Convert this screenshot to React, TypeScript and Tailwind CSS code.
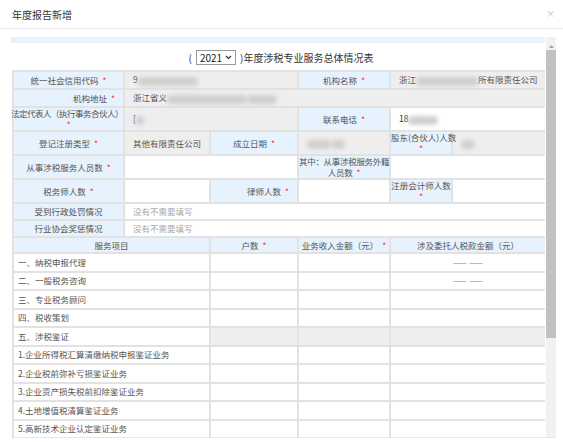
import React from 'react';

const font = { fontFamily: '"Noto Sans CJK SC", "Noto Sans", sans-serif' };

function Star() {
  return <span className="ml-1 text-[#f33]">*</span>;
}

function Blur({ w }: { w: number }) {
  return (
    <span
      className="inline-block h-[9px] rounded-full bg-[#cfcfcf] blur-[2px] align-middle"
      style={{ width: w }}
    />
  );
}

const label = 'bg-[#e6f2fd] border-2 border-[#e2e2e2] text-center text-[#555] leading-[11px] px-0.5';
const ro = 'bg-[#eeeeee] border-2 border-[#e2e2e2] px-2 text-[#555] leading-[11px]';
const inp = 'bg-white border-2 border-[#e2e2e2] px-2 leading-[11px]';
const item = 'bg-white border-2 border-[#e2e2e2] px-1 text-[#555] leading-[11px]';

const services = [
  { name: '一、纳税申报代理', dash: true },
  { name: '二、一般税务咨询', dash: true },
  { name: '三、专业税务顾问' },
  { name: '四、税收策划' },
  { name: '五、涉税鉴证', locked: true },
  { name: '1.企业所得税汇算清缴纳税申报鉴证业务' },
  { name: '2.企业税前弥补亏损鉴证业务' },
  { name: '3.企业资产损失税前扣除鉴证业务' },
  { name: '4.土地增值税清算鉴证业务' },
  { name: '5.高新技术企业认定鉴证业务' },
];

export default function App() {
  return (
    <div className="h-[442px] w-[563px] overflow-hidden bg-white" style={font}>
      {/* Header */}
      <div className="flex h-[29px] items-center justify-between border-b border-[#ececec] pl-3 pr-2">
        <span className="text-[10px] text-[#333]">年度报告新增</span>
        <span className="text-[9px] text-[#bbb]">×</span>
      </div>

      <div className="mt-2 ml-[11px] flex h-[401px] w-[545px] border-b border-[#d9eaf7]">
        {/* content */}
        <div className="w-[534px] overflow-hidden">
          <div className="h-[6px] bg-[#e6f2fc]" />
          <div className="flex h-[26px] items-center justify-center pl-[6px] pt-[2px] text-[10px] text-[#333]">
            <span className="mr-1">(</span>
            <span className="flex h-[15px] items-center gap-[3px] border border-[#999] px-[3px] text-[10px] text-[#222]">
              2021
              <svg width="7" height="5" viewBox="0 0 7 5">
                <path d="M1 1l2.5 2.5L6 1" fill="none" stroke="#333" strokeWidth="1.2" />
              </svg>
            </span>
            <span className="ml-1">)年度涉税专业服务总体情况表</span>
          </div>

          <table className="ml-[1px] mt-[1px] w-[533px] table-fixed border-collapse text-[8.5px]">
            <colgroup>
              <col className="w-[111px]" />
              <col className="w-[86px]" />
              <col className="w-[88px]" />
              <col className="w-[92px]" />
              <col className="w-[62px]" />
              <col className="w-[94px]" />
            </colgroup>
            <tbody>
              <tr className="h-[18px]">
                <td className={label}>统一社会信用代码<Star /></td>
                <td className={ro} colSpan={2}>9<Blur w={60} /></td>
                <td className={label}>机构名称<Star /></td>
                <td className={ro + ' whitespace-nowrap'} colSpan={2}>
                  浙江<Blur w={62} />所有限责任公司
                </td>
              </tr>
              <tr className="h-[18px]">
                <td className={label + ' !text-right pr-2'}>机构地址<Star /></td>
                <td className={ro} colSpan={5}>浙江省义<Blur w={80} /><Blur w={30} /></td>
              </tr>
              <tr className="h-[22px]">
                <td className={label + ' whitespace-nowrap tracking-[-0.5px] !px-0'}>
                  <div className="-ml-[3px]">法定代表人（执行事务合伙人）</div>
                  <div className="text-[#f33]">*</div>
                </td>
                <td className={ro} colSpan={2}>[<Blur w={8} /></td>
                <td className={label}>联系电话<Star /></td>
                <td className={inp + ' text-[#333]'} colSpan={2}>18<Blur w={30} /></td>
              </tr>
              <tr className="h-[23px]">
                <td className={label}>登记注册类型<Star /></td>
                <td className={ro}>其他有限责任公司</td>
                <td className={label}>成立日期<Star /></td>
                <td className={ro}><Blur w={24} /><Blur w={14} /></td>
                <td className={label + ' align-top whitespace-nowrap !px-0'}>
                  股东(合伙人)人数
                  <div className="text-[#f33]">*</div>
                </td>
                <td className={ro}><Blur w={14} /></td>
              </tr>
              <tr className="h-[22px]">
                <td className={label}>从事涉税服务人员数<Star /></td>
                <td className={inp} colSpan={2} />
                <td className={label + ' whitespace-nowrap tracking-[-0.3px] !px-0'}>
                  其中：从事涉税服务外籍
                  <br />
                  人员数<Star />
                </td>
                <td className={inp} colSpan={2} />
              </tr>
              <tr className="h-[22px]">
                <td className={label}>税务师人数<Star /></td>
                <td className={inp} />
                <td className={label + ' !text-right pr-2'}>律师人数<Star /></td>
                <td className={inp} />
                <td className={label + ' align-top whitespace-nowrap !px-0'}>
                  注册会计师人数
                  <div className="text-[#f33]">*</div>
                </td>
                <td className={inp} />
              </tr>
              <tr className="h-[17px]">
                <td className={label}>受到行政处罚情况</td>
                <td className={inp + ' text-[#aaa]'} colSpan={5}>没有不需要填写</td>
              </tr>
              <tr className="h-[17px]">
                <td className={label}>行业协会奖惩情况</td>
                <td className={inp + ' text-[#aaa]'} colSpan={5}>没有不需要填写</td>
              </tr>
              <tr className="h-[16px]">
                <td className={label} colSpan={2}>服务项目</td>
                <td className={label}>户数<Star /></td>
                <td className={label}>业务收入金额（元）<Star /></td>
                <td className={label} colSpan={2}>涉及委托人税款金额（元）</td>
              </tr>
              {services.map((s) => (
                <tr key={s.name} className="h-[18.5px]">
                  <td className={item + ' whitespace-nowrap'} colSpan={2}>{s.name}</td>
                  <td className={s.locked ? ro : inp} />
                  <td className={s.locked ? ro : inp} />
                  <td className={(s.locked ? ro : inp) + ' text-center text-[#888]'} colSpan={2}>
                    {s.dash ? '—— ——' : ''}
                  </td>
                </tr>
              ))}
            </tbody>
          </table>
        </div>

        {/* scrollbar */}
        <div className="ml-auto flex w-[10px] flex-col bg-[#f1f1f1]">
          <div className="flex h-[13px] items-end justify-center pb-[2px]">
            <svg width="5" height="3" viewBox="0 0 5 3">
              <path d="M0 3L2.5 0L5 3z" fill="#a3a3a3" />
            </svg>
          </div>
          <div className="h-[288px] bg-[#c1c1c1]" />
        </div>
      </div>
    </div>
  );
}
